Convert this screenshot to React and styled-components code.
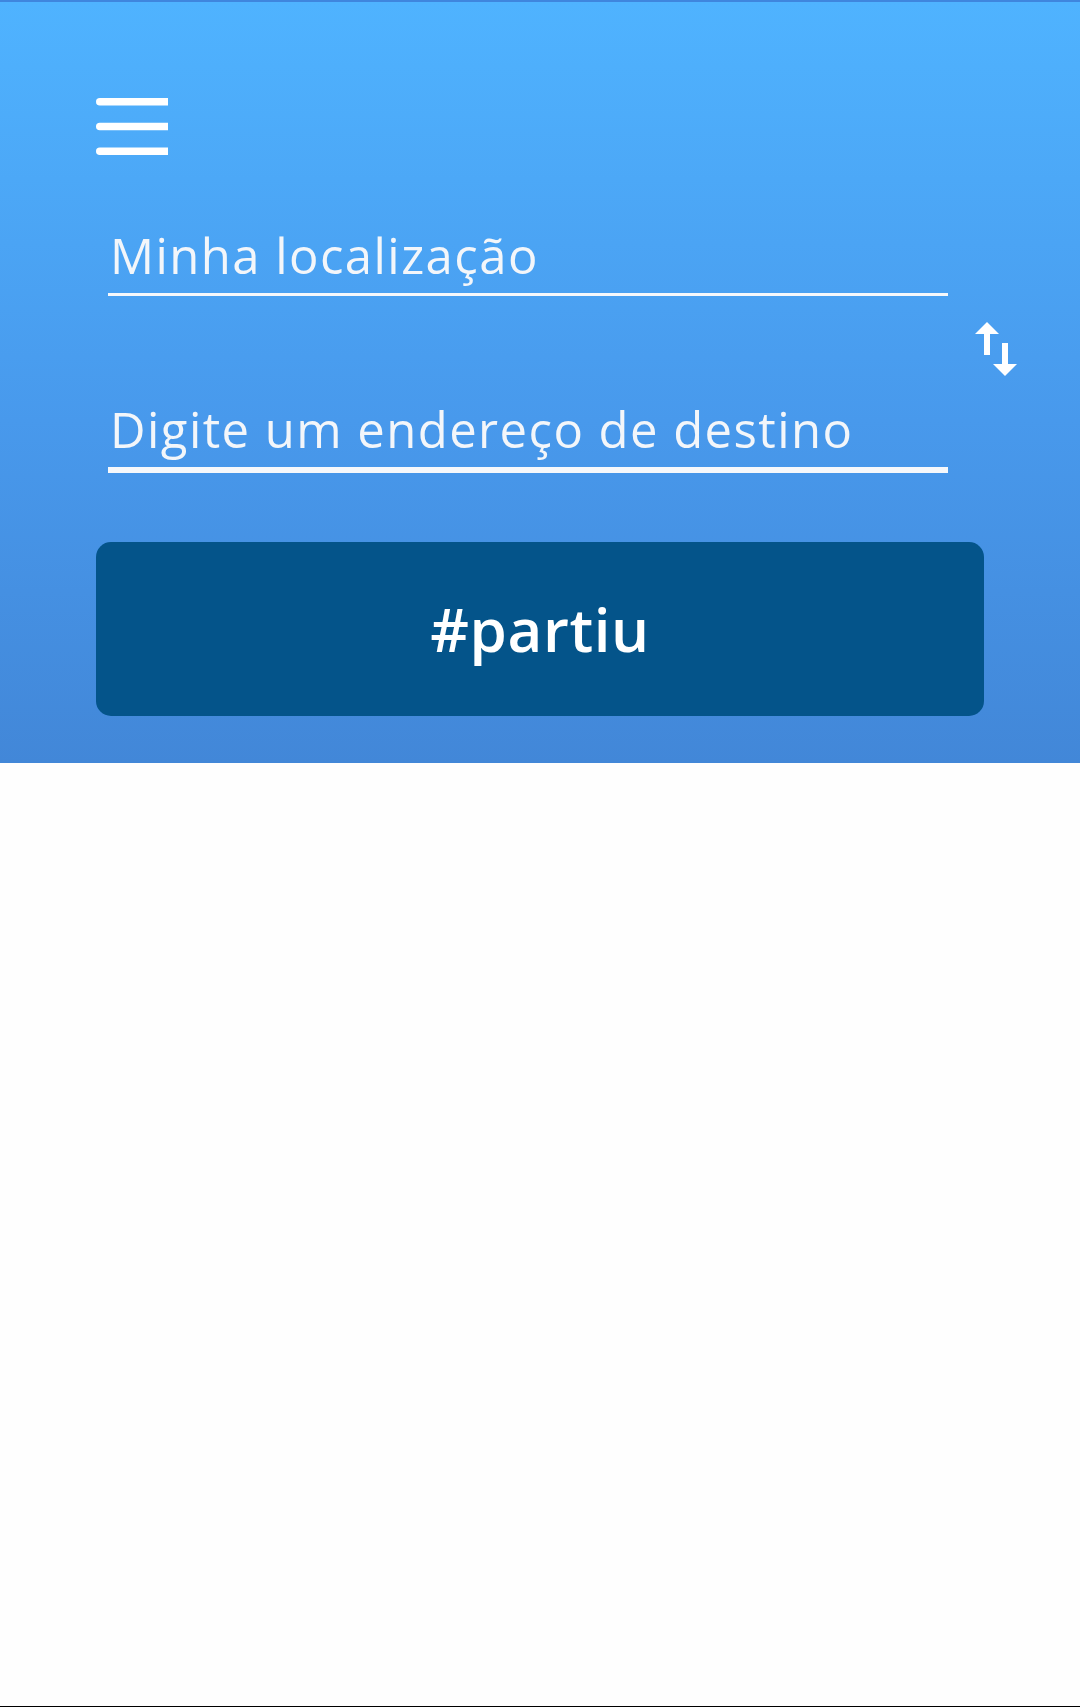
import React from 'react';
import styled, { createGlobalStyle } from 'styled-components';

const GlobalStyle = createGlobalStyle`
  html, body {
    margin: 0;
    padding: 0;
    background: #ffffff;
  }

  * {
    box-sizing: border-box;
  }
`;

const Page = styled.div`
  min-height: 1707px;
  display: flex;
  flex-direction: column;
  background: #fefefe;
  border-bottom: 1px solid #000;
  font-family: 'Open Sans', 'Lato', sans-serif;
`;

const Header = styled.header`
  display: flex;
  flex-direction: column;
  height: 763px;
  padding: 0 0 0 96px;
  border-top: 2px solid #3f86de;
  background: linear-gradient(180deg, #4fb3ff 0%, #4899ec 55%, #4287d8 100%);
`;

const MenuButton = styled.button`
  width: 72px;
  height: 57px;
  margin-top: 96px;
  padding: 0;
  border: none;
  background: none;
  cursor: pointer;
  display: block;

  svg {
    display: block;
  }
`;

const SearchRow = styled.div`
  display: flex;
  align-items: center;
  margin-top: 76px;
`;

const Fields = styled.div`
  display: flex;
  flex-direction: column;
  width: 840px;
  margin-left: 12px;
`;

const Field = styled.div`
  font-size: 49px;
  line-height: 49px;
  font-weight: 500;
  letter-spacing: 1.45px;
  color: #f3f6fa;
  padding: 0 0 ${(p) => p.$pad}px 2px;
  border-bottom: ${(p) => p.$line}px solid #f6f8fb;
  margin-top: ${(p) => p.$gap || 0}px;
  white-space: nowrap;
`;

const SwapButton = styled.button`
  margin: 0 0 7px 27px;
  padding: 0;
  border: none;
  background: none;
  cursor: pointer;

  svg {
    display: block;
  }
`;

const GoButton = styled.button`
  width: 888px;
  height: 174px;
  margin-top: 69px;
  border: none;
  border-radius: 15px;
  background: #04548a;
  color: #ffffff;
  font-family: 'Open Sans', 'Lato', sans-serif;
  font-size: 60px;
  font-weight: 600;
  letter-spacing: 0.6px;
  cursor: pointer;
  display: flex;
  align-items: center;
  justify-content: center;
`;

const MenuIcon = () => (
  <svg width="72" height="57" viewBox="0 0 72 57" fill="#ffffff">
    <path d="M3.75 0H72V7.5H3.75A3.75 3.75 0 0 1 3.75 0Z" />
    <path d="M3.75 24.75H72V32.25H3.75A3.75 3.75 0 0 1 3.75 24.75Z" />
    <path d="M3.75 49.5H72V57H3.75A3.75 3.75 0 0 1 3.75 49.5Z" />
  </svg>
);

const SwapIcon = () => (
  <svg width="42" height="54" viewBox="0 0 42 54" fill="#ffffff">
    <polygon points="0,12 12,0 24,12" />
    <rect x="9" y="11" width="6" height="22" />
    <rect x="27" y="21" width="6" height="22" />
    <polygon points="18,42 42,42 30,54" />
  </svg>
);

const App = () => (
  <Page>
    <GlobalStyle />
    <Header>
      <MenuButton aria-label="menu">
        <MenuIcon />
      </MenuButton>
      <SearchRow>
        <Fields>
          <Field $pad={13} $line={3}>Minha localização</Field>
          <Field $pad={13} $line={6} $gap={109}>Digite um endereço de destino</Field>
        </Fields>
        <SwapButton aria-label="inverter">
          <SwapIcon />
        </SwapButton>
      </SearchRow>
      <GoButton>#partiu</GoButton>
    </Header>
  </Page>
);

export default App;
